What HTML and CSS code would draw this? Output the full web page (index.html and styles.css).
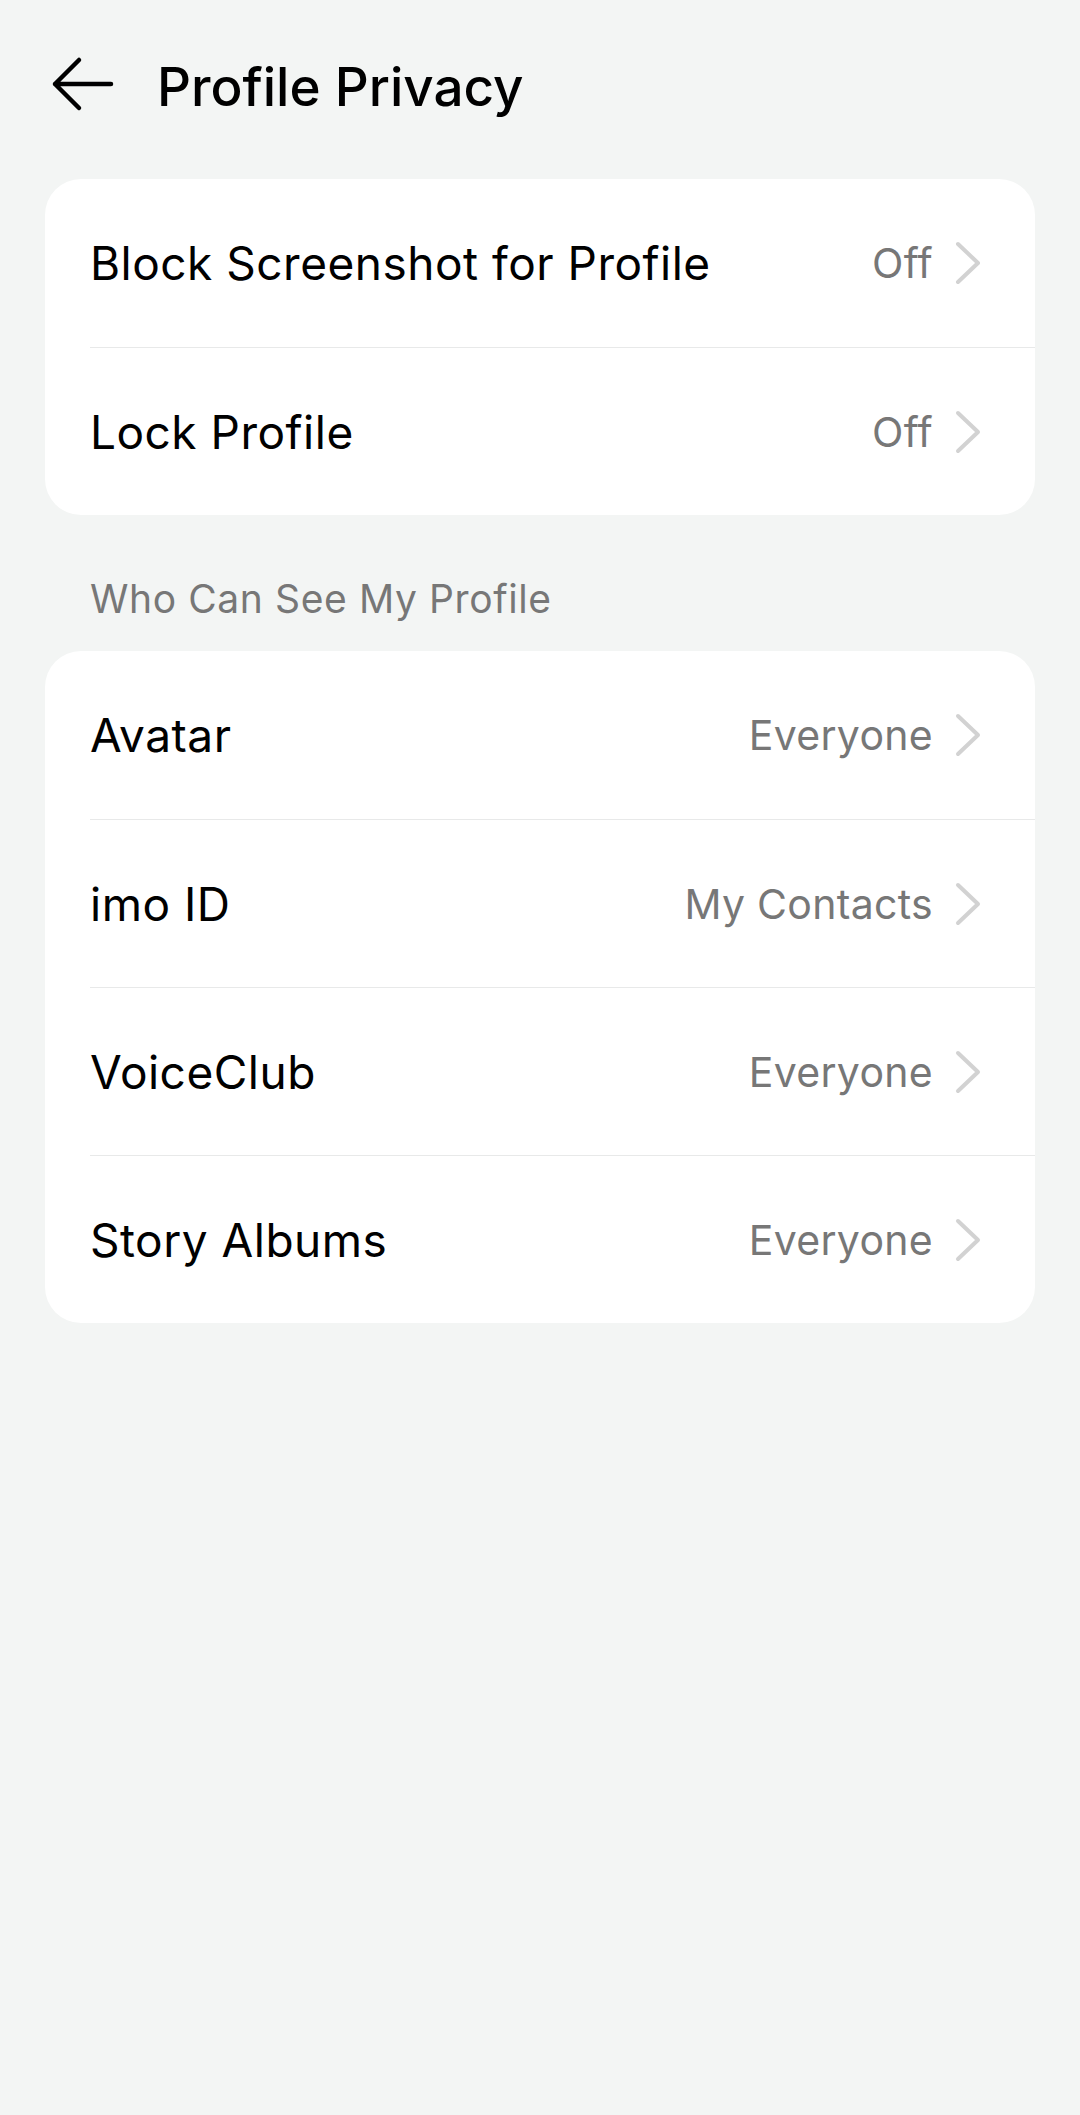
FILE: index.html
```html
<!DOCTYPE html>
<html lang="en">
<head>
  <meta charset="UTF-8">
  <title>Profile Privacy</title>
  <link rel="stylesheet" href="styles.css">
</head>
<body>
  <header class="topbar">
    <a class="back" href="#">
      <svg width="64" height="56" viewBox="0 0 64 56">
        <path d="M4 28 H60 M28 4 L4 28 L28 52" fill="none" stroke="#000" stroke-width="4.5" stroke-linecap="round" stroke-linejoin="round"/>
      </svg>
    </a>
    <h1>Profile Privacy</h1>
  </header>

  <section class="card">
    <div class="row">
      <span class="label">Block Screenshot for Profile</span>
      <span class="value">Off</span>
      <svg class="chev" width="28" height="44" viewBox="0 0 28 44"><path d="M4 3 L24 22 L4 41" fill="none" stroke="#d2d2d2" stroke-width="4" stroke-linecap="round" stroke-linejoin="round"/></svg>
    </div>
    <div class="row">
      <span class="label">Lock Profile</span>
      <span class="value">Off</span>
      <svg class="chev" width="28" height="44" viewBox="0 0 28 44"><path d="M4 3 L24 22 L4 41" fill="none" stroke="#d2d2d2" stroke-width="4" stroke-linecap="round" stroke-linejoin="round"/></svg>
    </div>
  </section>

  <h2 class="section-title">Who Can See My Profile</h2>

  <section class="card">
    <div class="row">
      <span class="label">Avatar</span>
      <span class="value">Everyone</span>
      <svg class="chev" width="28" height="44" viewBox="0 0 28 44"><path d="M4 3 L24 22 L4 41" fill="none" stroke="#d2d2d2" stroke-width="4" stroke-linecap="round" stroke-linejoin="round"/></svg>
    </div>
    <div class="row">
      <span class="label">imo ID</span>
      <span class="value">My Contacts</span>
      <svg class="chev" width="28" height="44" viewBox="0 0 28 44"><path d="M4 3 L24 22 L4 41" fill="none" stroke="#d2d2d2" stroke-width="4" stroke-linecap="round" stroke-linejoin="round"/></svg>
    </div>
    <div class="row">
      <span class="label">VoiceClub</span>
      <span class="value">Everyone</span>
      <svg class="chev" width="28" height="44" viewBox="0 0 28 44"><path d="M4 3 L24 22 L4 41" fill="none" stroke="#d2d2d2" stroke-width="4" stroke-linecap="round" stroke-linejoin="round"/></svg>
    </div>
    <div class="row">
      <span class="label">Story Albums</span>
      <span class="value">Everyone</span>
      <svg class="chev" width="28" height="44" viewBox="0 0 28 44"><path d="M4 3 L24 22 L4 41" fill="none" stroke="#d2d2d2" stroke-width="4" stroke-linecap="round" stroke-linejoin="round"/></svg>
    </div>
  </section>
</body>
</html>
```

FILE: styles.css
```css
body {
  margin: 0;
  background-color: #f3f5f4;
  font-family: Inter, "Noto Sans", sans-serif;
  color: #000;
}

.topbar {
  display: flex;
  align-items: center;
  height: 168px;
  padding-left: 51px;
  box-sizing: border-box;
}

.back {
  display: flex;
  width: 64px;
  height: 56px;
}

.topbar h1 {
  margin: 6px 0 0 42px;
  font-size: 53px;
  font-weight: 500;
}

.card {
  background: white;
  margin: 11px 45px 0;
  border-radius: 36px;
  overflow: hidden;
}

.row {
  display: flex;
  align-items: center;
  height: 168px;
  margin-left: 45px;
  padding-right: 53px;
  box-sizing: border-box;
}

.row + .row {
  border-top: 1px solid #e8e9e9;
}

.label {
  flex: 1;
  font-size: 46px;
  letter-spacing: 0.5px;
}

.value {
  font-size: 41px;
  color: #777;
  letter-spacing: 0.3px;
}

.chev {
  margin-left: 21px;
}

.section-title {
  margin: 0;
  padding: 58px 90px 26px;
  font-size: 39px;
  line-height: 52px;
  font-weight: 400;
  color: #777;
  letter-spacing: 0.6px;
}

.section-title + .card {
  margin-top: 0;
}
```
